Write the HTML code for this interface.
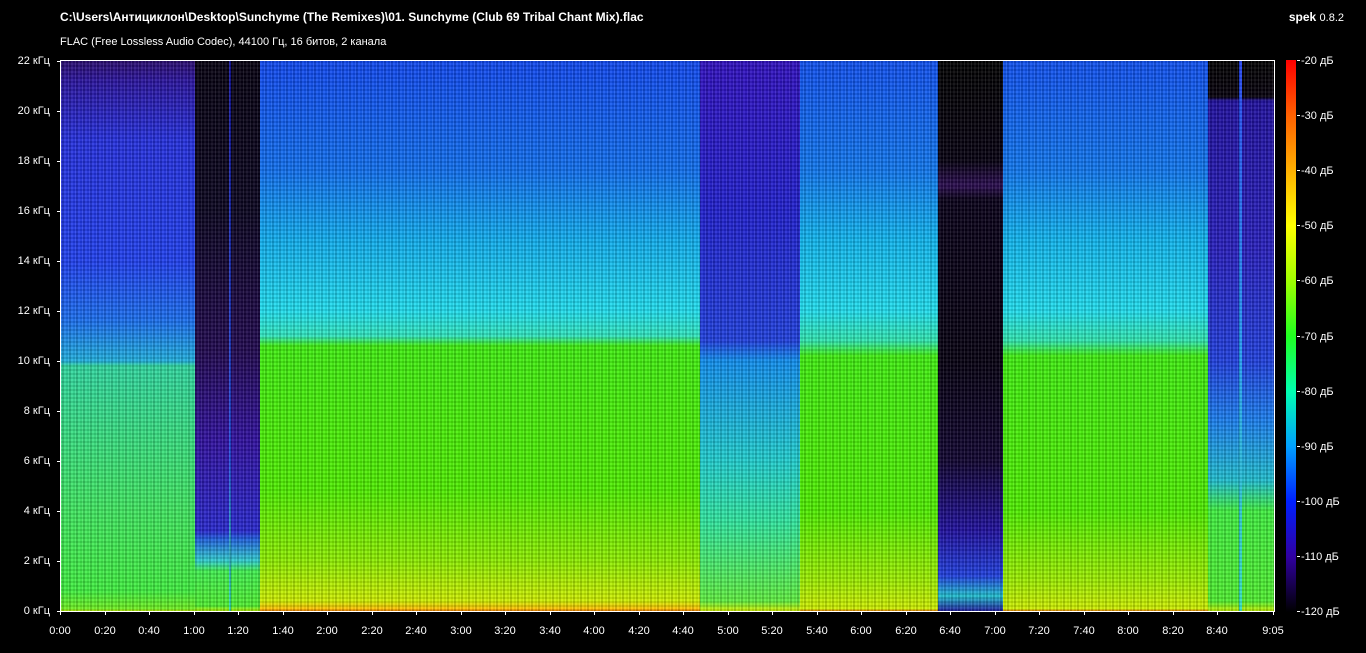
<!DOCTYPE html>
<html><head><meta charset="utf-8"><style>
body{margin:0;width:1366px;height:653px;background:#000;overflow:hidden;position:relative;font-family:"Liberation Sans",Arial,sans-serif;color:#fff}
.a{position:absolute}
.t{font-size:12px;font-weight:bold;left:60px;top:10px}
.s{font-size:11px;left:60px;top:36px}
.sp{position:absolute;top:61px;height:550px}
.fl{position:absolute;right:1316px;font-size:11px;white-space:nowrap}
.tk{position:absolute;width:3px;height:1px;background:#fff;left:57px}
.xl{position:absolute;top:625px;font-size:11px;transform:translateX(-50%)}
.xt{position:absolute;top:611px;width:1px;height:4px;background:#fff}
.cl{position:absolute;left:1301px;font-size:11px}
.ct{position:absolute;left:1297px;width:3px;height:1px;background:#fff}
.tex{position:absolute;left:61px;top:61px;width:1213px;height:550px;background:repeating-linear-gradient(90deg,rgba(255,255,255,.09) 0 1px,rgba(0,0,0,.14) 1px 3px,rgba(255,255,255,.05) 3px 5px,rgba(0,0,0,.06) 5px 7px),repeating-linear-gradient(0deg,rgba(0,0,0,.1) 0 2px,rgba(255,255,255,.05) 2px 4px)}
</style></head><body>
<div class="a t">C:\Users\Антициклон\Desktop\Sunchyme (The Remixes)\01. Sunchyme (Club 69 Tribal Chant Mix).flac</div>
<div class="a s">FLAC (Free Lossless Audio Codec), 44100 Гц, 16 битов, 2 канала</div>
<div class="a" style="right:22px;top:10px;font-size:12px"><b>spek</b> <span style="font-size:11px">0.8.2</span></div>

<div class="sp" style="left:61px;width:134px;background:linear-gradient(#2a0c70 0,#2a14a0 20px,#2530e0 80px,#2040f0 200px,#1a70f0 260px,#20b0e0 300px,#30d8a0 305px,#40e860 450px,#40f040 530px,#70f020 548px,#c0f000 550px)"></div>
<div class="sp" style="left:195px;width:65px;background:linear-gradient(#050010 0,#0a0420 150px,#200850 290px,#3010a0 380px,#2828d0 470px,#2060e0 478px,#30d0d0 500px,#40f050 510px,#50f030 545px,#b0f000 550px)"></div>
<div class="sp" style="left:260px;width:440px;background:linear-gradient(#1048f0 0,#1070f0 110px,#10b0f0 180px,#20e0f0 250px,#30e8c0 275px,#40f010 285px,#50f000 430px,#90f000 500px,#d0f000 540px,#ffc000 548px,#f08000 550px)"></div>
<div class="sp" style="left:700px;width:100px;background:linear-gradient(#3010c0 0,#2020d0 150px,#2040e0 280px,#1090f0 300px,#20d0d0 400px,#30e8a0 460px,#60f040 540px,#d0f000 550px)"></div>
<div class="sp" style="left:800px;width:138px;background:linear-gradient(#1050f0 0,#1078f0 110px,#10b8f0 180px,#20e0f0 250px,#30e8b0 280px,#40f010 295px,#50f000 450px,#a0f000 520px,#d0f000 548px,#f08000 550px)"></div>
<div class="sp" style="left:938px;width:65px;background:linear-gradient(#000 0,#050010 100px,#200840 118px,#2a0c50 125px,#080018 138px,#050010 300px,#100430 400px,#2010a0 470px,#2040e0 515px,#20c0d0 535px,#2020a0 550px)"></div>
<div class="sp" style="left:1003px;width:205px;background:linear-gradient(#1050f0 0,#1078f0 110px,#10b8f0 180px,#20e0f0 250px,#30e8b0 280px,#40f010 295px,#50f000 450px,#a0f000 520px,#d0f000 548px,#f08000 550px)"></div>
<div class="sp" style="left:1208px;width:66px;background:linear-gradient(#000 0,#05000c 36px,#2010a0 40px,#2820c0 190px,#2040e0 300px,#1a80f0 360px,#20c0d0 420px,#40f040 450px,#50f030 540px,#c0f000 550px)"></div>
<div class="sp" style="left:1239px;width:3px;background:linear-gradient(#2040f0,#20a0f0 300px,#30e0c0)"></div>
<div class="sp" style="left:229px;width:2px;background:linear-gradient(#1010a0,#2050e0 400px,#30e0b0)"></div>
<div class="tex"></div>
<div class="a" style="left:60px;top:60px;width:1213px;height:550px;border:1px solid #fff"></div>

<div class="fl" style="top:55px">22 кГц</div><div class="fl" style="top:105px">20 кГц</div><div class="fl" style="top:155px">18 кГц</div><div class="fl" style="top:205px">16 кГц</div><div class="fl" style="top:255px">14 кГц</div><div class="fl" style="top:305px">12 кГц</div><div class="fl" style="top:355px">10 кГц</div><div class="fl" style="top:405px">8 кГц</div><div class="fl" style="top:455px">6 кГц</div><div class="fl" style="top:505px">4 кГц</div><div class="fl" style="top:555px">2 кГц</div><div class="fl" style="top:605px">0 кГц</div>
<div class="tk" style="top:61px"></div><div class="tk" style="top:111px"></div><div class="tk" style="top:161px"></div><div class="tk" style="top:211px"></div><div class="tk" style="top:261px"></div><div class="tk" style="top:311px"></div><div class="tk" style="top:361px"></div><div class="tk" style="top:411px"></div><div class="tk" style="top:461px"></div><div class="tk" style="top:511px"></div><div class="tk" style="top:561px"></div><div class="tk" style="top:611px"></div>

<div class="xt" style="left:60px"></div><div class="xl" style="left:60px">0:00</div>
<div class="xt" style="left:105px"></div><div class="xl" style="left:105px">0:20</div>
<div class="xt" style="left:149px"></div><div class="xl" style="left:149px">0:40</div>
<div class="xt" style="left:194px"></div><div class="xl" style="left:194px">1:00</div>
<div class="xt" style="left:238px"></div><div class="xl" style="left:238px">1:20</div>
<div class="xt" style="left:283px"></div><div class="xl" style="left:283px">1:40</div>
<div class="xt" style="left:327px"></div><div class="xl" style="left:327px">2:00</div>
<div class="xt" style="left:372px"></div><div class="xl" style="left:372px">2:20</div>
<div class="xt" style="left:416px"></div><div class="xl" style="left:416px">2:40</div>
<div class="xt" style="left:461px"></div><div class="xl" style="left:461px">3:00</div>
<div class="xt" style="left:505px"></div><div class="xl" style="left:505px">3:20</div>
<div class="xt" style="left:550px"></div><div class="xl" style="left:550px">3:40</div>
<div class="xt" style="left:594px"></div><div class="xl" style="left:594px">4:00</div>
<div class="xt" style="left:639px"></div><div class="xl" style="left:639px">4:20</div>
<div class="xt" style="left:683px"></div><div class="xl" style="left:683px">4:40</div>
<div class="xt" style="left:728px"></div><div class="xl" style="left:728px">5:00</div>
<div class="xt" style="left:772px"></div><div class="xl" style="left:772px">5:20</div>
<div class="xt" style="left:817px"></div><div class="xl" style="left:817px">5:40</div>
<div class="xt" style="left:861px"></div><div class="xl" style="left:861px">6:00</div>
<div class="xt" style="left:906px"></div><div class="xl" style="left:906px">6:20</div>
<div class="xt" style="left:950px"></div><div class="xl" style="left:950px">6:40</div>
<div class="xt" style="left:995px"></div><div class="xl" style="left:995px">7:00</div>
<div class="xt" style="left:1039px"></div><div class="xl" style="left:1039px">7:20</div>
<div class="xt" style="left:1084px"></div><div class="xl" style="left:1084px">7:40</div>
<div class="xt" style="left:1128px"></div><div class="xl" style="left:1128px">8:00</div>
<div class="xt" style="left:1173px"></div><div class="xl" style="left:1173px">8:20</div>
<div class="xt" style="left:1217px"></div><div class="xl" style="left:1217px">8:40</div>
<div class="xt" style="left:1273px"></div><div class="xl" style="left:1273px">9:05</div>

<div class="a" style="left:1286px;top:60px;width:10px;height:552px;background:linear-gradient(#ff0000 0%,#ff6000 10%,#ffb000 20%,#ffff00 30%,#a0ff00 40%,#20ff20 50%,#00ffb0 60%,#00a0ff 70%,#0020ff 80%,#3000a0 90%,#000 100%)"></div>
<div class="ct" style="top:60px"></div><div class="cl" style="top:55px">-20 дБ</div>
<div class="ct" style="top:115px"></div><div class="cl" style="top:110px">-30 дБ</div>
<div class="ct" style="top:170px"></div><div class="cl" style="top:165px">-40 дБ</div>
<div class="ct" style="top:225px"></div><div class="cl" style="top:220px">-50 дБ</div>
<div class="ct" style="top:280px"></div><div class="cl" style="top:275px">-60 дБ</div>
<div class="ct" style="top:336px"></div><div class="cl" style="top:331px">-70 дБ</div>
<div class="ct" style="top:391px"></div><div class="cl" style="top:386px">-80 дБ</div>
<div class="ct" style="top:446px"></div><div class="cl" style="top:441px">-90 дБ</div>
<div class="ct" style="top:501px"></div><div class="cl" style="top:496px">-100 дБ</div>
<div class="ct" style="top:556px"></div><div class="cl" style="top:551px">-110 дБ</div>
<div class="ct" style="top:611px"></div><div class="cl" style="top:606px">-120 дБ</div>
</body></html>
